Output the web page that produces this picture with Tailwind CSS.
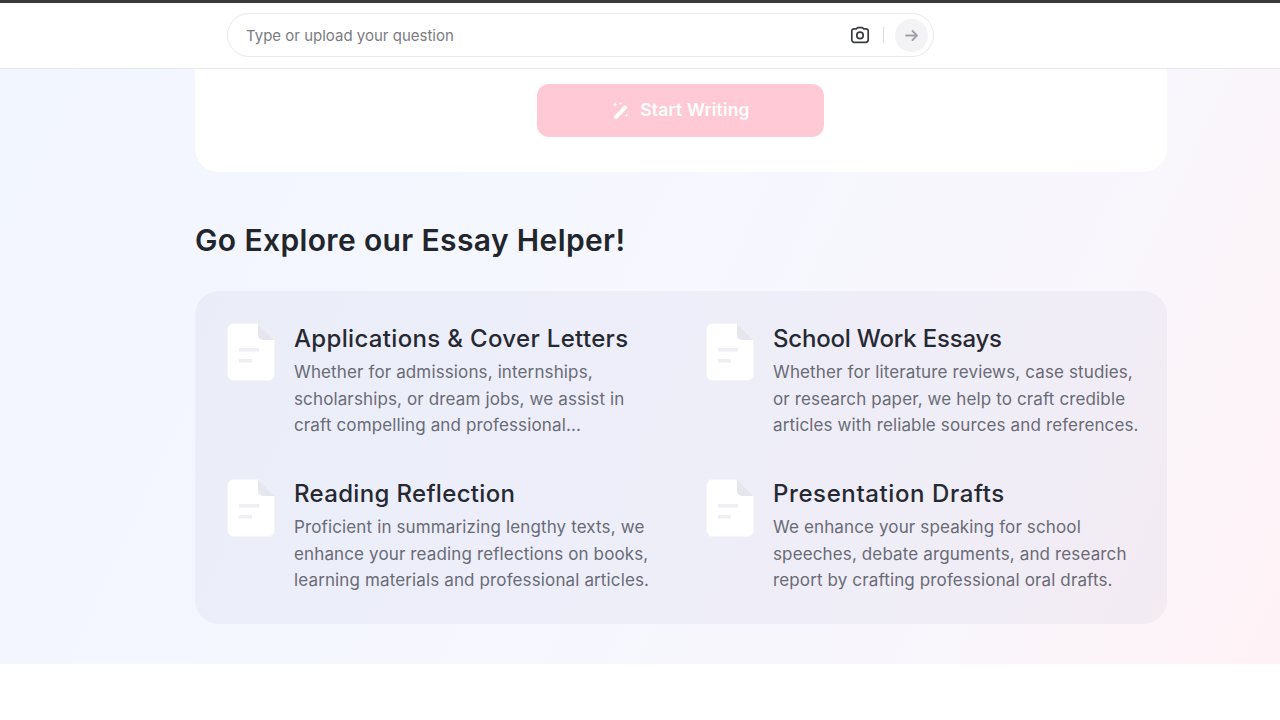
<html lang="en">
<head>
    <meta charset="UTF-8">
    <title>Essay Helper</title>
    <script src="https://cdn.jsdelivr.net/npm/@tailwindcss/browser@4"></script>
</head>
<body class="bg-white font-['Inter',sans-serif] overflow-hidden">
    <div class="h-[3px] bg-[#3a3a3a]"></div>
    <header class="h-[66px] bg-white border-b border-[#e8e8ea] pl-[227px] pt-[10px]">
        <div class="w-[707px] h-[44px] border border-[#e9e9ec] rounded-full flex items-center pl-[18px] pr-[5px]">
            <span class="flex-1 text-[15px] leading-[23px] pt-[1px] text-[#7a7c82]">Type or upload your question</span>
            <svg class="w-[20px] h-[20px] text-[#3a3c41]" viewBox="0 0 20 20" fill="none" stroke="currentColor" stroke-width="1.7" stroke-linejoin="round">
                <path d="M6.6 3.800 7.400 2.600h5.200l.8 1.200H16a2.200 2.200 0 0 1 2.200 2.200v8.800a2.600 2.600 0 0 1-2.600 2.600H4.400a2.600 2.600 0 0 1-2.600-2.600V6A2.200 2.200 0 0 1 4 3.800z"/>
                <circle cx="10" cy="10.400" r="3.200"/>
            </svg>
            <div class="w-px h-[16px] bg-[#dcdcdf] ml-[13px] mr-[11px]"></div>
            <div class="w-[33px] h-[33px] rounded-full bg-[#f3f3f5] flex items-center justify-center">
                <svg class="w-[15px] h-[15px] text-[#a0a0a9]" viewBox="0 0 15 15" fill="none" stroke="currentColor" stroke-width="1.8" stroke-linecap="round" stroke-linejoin="round">
                    <path d="M2 7.500h11M8.500 3l4.500 4.500L8.500 12"/>
                </svg>
            </div>
        </div>
    </header>

    <main class="h-[595px] px-[195px] bg-[linear-gradient(115deg,#f2f6ff_0%,#f6f7ff_50%,#f9f6fc_78%,#fff2f6_100%)]">
        <section class="w-[972px] h-[103px] bg-white rounded-b-[24px] pt-[15px] pr-[2px] flex justify-center">
            <button class="w-[287px] h-[53px] rounded-[12px] bg-[#ffcad6] flex items-center justify-center gap-[10px] text-white text-[17.500px] tracking-[0.2px] font-semibold">
                <svg class="w-[20px] h-[20px]" viewBox="0 0 18 18" fill="white">
                    <path d="M12.600 4.600a1.400 1.400 0 0 1 2 0l.4.4a1.400 1.400 0 0 1 0 2L6.300 15.700a1.400 1.400 0 0 1-2 0l-.4-.4a1.400 1.400 0 0 1 0-2z"/>
                    <path d="M4.500 1l.6 1.600 1.600.6-1.600.6-.6 1.600-.6-1.600-1.600-.6 1.600-.6zM15 11l.5 1.400 1.400.5-1.400.5-.5 1.400-.5-1.400-1.400-.5 1.400-.5zM9.500 1l.4 1 1 .4-1 .4-.4 1-.4-1-1-.4 1-.4z"/>
                </svg>
                Start Writing
            </button>
        </section>

        <h2 class="mt-[48px] h-[40px] leading-[40px] text-[30px] tracking-[0.37px] font-semibold text-[#22262c]">Go Explore our Essay Helper!</h2>

        <section class="mt-[31px] w-[972px] h-[333px] rounded-[24px] bg-[#2a2f6a]/[0.045] pl-[32px] pt-[32px] grid grid-cols-[479px_1fr] grid-rows-[156px_1fr]">
            <article class="flex">
                <svg class="w-[48px] h-[58px] shrink-0" viewBox="0 0 48 58">
                    <path d="M6.500 0.500h24.500l16.500 16.500v34.500a6 6 0 0 1-6 6H6.500a6 6 0 0 1-6-6v-45a6 6 0 0 1 6-6z" fill="white" stroke="#f4f4f9"/>
                    <path d="M31 0.500l16.500 16.500H36a5 5 0 0 1-5-5z" fill="#e6e6ee"/>
                    <path d="M12 25h20v3.500H12zM12 36h13v3.500H12z" fill="#eeeef3"/>
                </svg>
                <div class="ml-[19px]">
                    <h3 class="text-[24px] leading-[32px] tracking-[0.33px] font-medium text-[#262932]">Applications &amp; Cover Letters</h3>
                    <p class="mt-[4px] text-[17px] leading-[26.500px] tracking-[0.13px] text-[#696b76]">Whether for admissions, internships,<br>scholarships, or dream jobs, we assist in<br>craft compelling and professional...</p>
                </div>
            </article>
            <article class="flex">
                <svg class="w-[48px] h-[58px] shrink-0" viewBox="0 0 48 58">
                    <path d="M6.500 0.500h24.500l16.500 16.500v34.500a6 6 0 0 1-6 6H6.500a6 6 0 0 1-6-6v-45a6 6 0 0 1 6-6z" fill="white" stroke="#f4f4f9"/>
                    <path d="M31 0.500l16.500 16.500H36a5 5 0 0 1-5-5z" fill="#e6e6ee"/>
                    <path d="M12 25h20v3.500H12zM12 36h13v3.500H12z" fill="#eeeef3"/>
                </svg>
                <div class="ml-[19px]">
                    <h3 class="text-[24px] leading-[32px] font-medium tracking-[-0.2px] text-[#262932]">School Work Essays</h3>
                    <p class="mt-[4px] text-[17px] leading-[26.500px] tracking-[0.13px] text-[#696b76]">Whether for literature reviews, case studies,<br>or research paper, we help to craft credible<br>articles with reliable sources and references.</p>
                </div>
            </article>
            <article class="flex">
                <svg class="w-[48px] h-[58px] shrink-0" viewBox="0 0 48 58">
                    <path d="M6.500 0.500h24.500l16.500 16.500v34.500a6 6 0 0 1-6 6H6.500a6 6 0 0 1-6-6v-45a6 6 0 0 1 6-6z" fill="white" stroke="#f4f4f9"/>
                    <path d="M31 0.500l16.500 16.500H36a5 5 0 0 1-5-5z" fill="#e6e6ee"/>
                    <path d="M12 25h20v3.500H12zM12 36h13v3.500H12z" fill="#eeeef3"/>
                </svg>
                <div class="ml-[19px] -mt-[1px]">
                    <h3 class="text-[24px] leading-[32px] tracking-[0.33px] font-medium text-[#262932]">Reading Reflection</h3>
                    <p class="mt-[4px] text-[17px] leading-[26.500px] tracking-[0.13px] text-[#696b76]">Proficient in summarizing lengthy texts, we<br>enhance your reading reflections on books,<br>learning materials and professional articles.</p>
                </div>
            </article>
            <article class="flex">
                <svg class="w-[48px] h-[58px] shrink-0" viewBox="0 0 48 58">
                    <path d="M6.500 0.500h24.500l16.500 16.500v34.500a6 6 0 0 1-6 6H6.500a6 6 0 0 1-6-6v-45a6 6 0 0 1 6-6z" fill="white" stroke="#f4f4f9"/>
                    <path d="M31 0.500l16.500 16.500H36a5 5 0 0 1-5-5z" fill="#e6e6ee"/>
                    <path d="M12 25h20v3.500H12zM12 36h13v3.500H12z" fill="#eeeef3"/>
                </svg>
                <div class="ml-[19px] -mt-[1px]">
                    <h3 class="text-[24px] leading-[32px] tracking-[0.6px] font-medium text-[#262932]">Presentation Drafts</h3>
                    <p class="mt-[4px] text-[17px] leading-[26.500px] tracking-[0.13px] text-[#696b76]">We enhance your speaking for school<br>speeches, debate arguments, and research<br>report by crafting professional oral drafts.</p>
                </div>
            </article>
        </section>
    </main>
</body>
</html>
